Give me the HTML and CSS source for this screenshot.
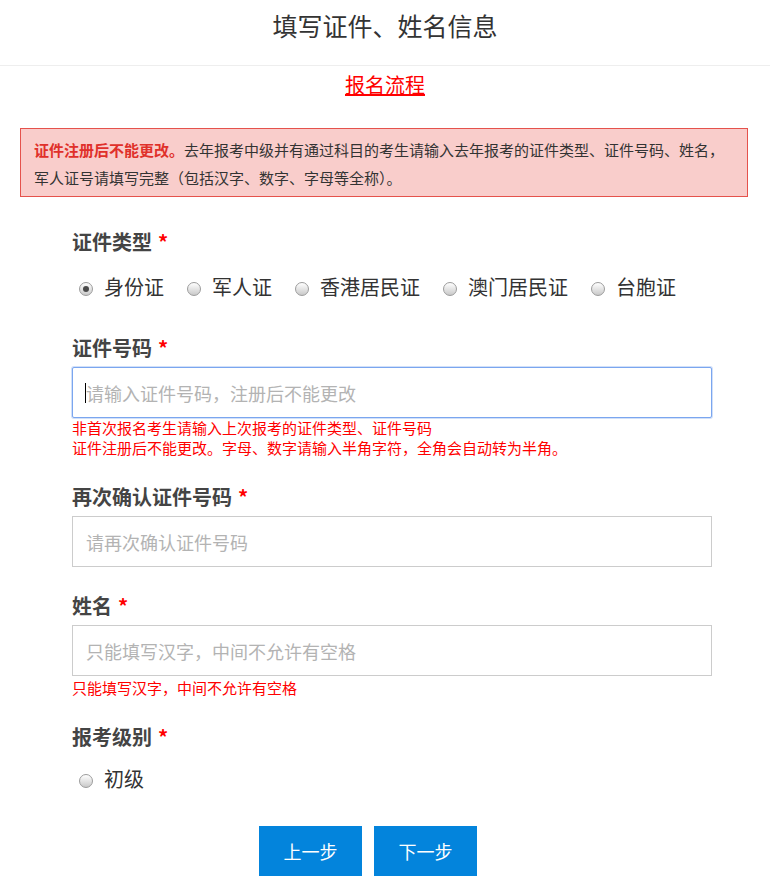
FILE: index.html
```html
<!DOCTYPE html>
<html lang="zh-CN">
<head>
<meta charset="utf-8">
<title>填写证件、姓名信息</title>
<link rel="stylesheet" href="styles.css">
</head>
<body>
<header class="page-head">
  <h1 class="page-title">填写证件、姓名信息</h1>
</header>
<div class="flow"><a class="flow-link" href="#">报名流程</a></div>
<div class="alert"><strong class="alert-strong">证件注册后不能更改。</strong>去年报考中级并有通过科目的考生请输入去年报考的证件类型、证件号码、姓名，<br>军人证号请填写完整（包括汉字、数字、字母等全称）。</div>

<form class="form">
  <div class="field field-first">
    <div class="label">证件类型<span class="req">*</span></div>
    <div class="radios">
      <label class="opt"><span class="dot checked"></span>身份证</label>
      <label class="opt"><span class="dot"></span>军人证</label>
      <label class="opt"><span class="dot"></span>香港居民证</label>
      <label class="opt"><span class="dot"></span>澳门居民证</label>
      <label class="opt"><span class="dot"></span>台胞证</label>
    </div>
  </div>

  <div class="field field-after-radio">
    <div class="label">证件号码<span class="req">*</span></div>
    <div class="input-wrap"><input class="input input-focus" type="text" placeholder="请输入证件号码，注册后不能更改"><span class="caret"></span></div>
    <div class="help">非首次报名考生请输入上次报考的证件类型、证件号码<br>证件注册后不能更改。字母、数字请输入半角字符，全角会自动转为半角。</div>
  </div>

  <div class="field">
    <div class="label">再次确认证件号码<span class="req">*</span></div>
    <input class="input" type="text" placeholder="请再次确认证件号码">
  </div>

  <div class="field">
    <div class="label">姓名<span class="req">*</span></div>
    <input class="input" type="text" placeholder="只能填写汉字，中间不允许有空格">
    <div class="help help-gap">只能填写汉字，中间不允许有空格</div>
  </div>

  <div class="field">
    <div class="label">报考级别<span class="req">*</span></div>
    <div class="radios radios-level">
      <label class="opt"><span class="dot"></span>初级</label>
    </div>
  </div>

  <div class="actions">
    <button class="btn" type="button">上一步</button>
    <button class="btn" type="button">下一步</button>
  </div>
</form>
</body>
</html>
```

FILE: styles.css
```css
html, body {
  margin: 0;
  padding: 0;
  background: #fff;
}
body {
  font-family: "Noto Sans CJK SC", "Noto Sans", "Liberation Sans", sans-serif;
  color: #333;
}
.page-head {
  height: 66px;
  border-bottom: 1px solid #eeeeee;
  box-sizing: border-box;
}
.page-title {
  margin: 0;
  font-size: 25px;
  font-weight: normal;
  line-height: 50px;
  text-align: center;
  color: #333;
}
.flow {
  text-align: center;
  line-height: 38px;
  height: 38px;
}
.flow-link {
  font-size: 20px;
  color: #ff0000;
  text-decoration: underline;
}
.alert {
  margin: 24px 22px 0 20px;
  padding: 7px 13px 4px 13px;
  border: 1px solid #e5524c;
  background: #f9cdcb;
  font-size: 15px;
  line-height: 28px;
  color: #333;
  white-space: nowrap;
}
.alert-strong {
  color: #e0302a;
  font-weight: bold;
}
.form {
  margin: 0 58px 0 72px;
}
.field {
  margin-top: 24px;
}
.field-first {
  margin-top: 30px;
}
.field-after-radio {
  margin-top: 31px;
}
.label {
  font-size: 20px;
  font-weight: bold;
  line-height: 30px;
  color: #444;
  margin-bottom: 4px;
}
.req {
  color: #ff0000;
  margin-left: 6px;
}
.radios {
  display: flex;
  margin-top: 15px;
  line-height: 30px;
  font-size: 20px;
  color: #333;
}
.radios-level {
  margin-top: 12px;
}
.opt {
  display: inline-flex;
  align-items: center;
  margin-right: 16px;
}
.dot {
  width: 14px;
  height: 14px;
  box-sizing: border-box;
  border-radius: 50%;
  border: 1px solid #9c9c9c;
  background: linear-gradient(#ffffff, #c9c9c9);
  margin: 3px 11px 0 7px;
  display: inline-flex;
  align-items: center;
  justify-content: center;
}
.dot.checked::after {
  content: "";
  width: 6px;
  height: 6px;
  border-radius: 50%;
  background: #4a4a4a;
}
.input-wrap {
  position: relative;
}
.input {
  display: block;
  width: 100%;
  height: 51px;
  box-sizing: border-box;
  border: 1px solid #cccccc;
  padding: 0 13px;
  font-family: inherit;
  font-size: 18px;
  color: #333;
  background: #fff;
  outline: none;
}
.input::placeholder {
  color: #b3b3b3;
}
.input-focus {
  border-color: #7ba6ef;
  border-radius: 2px;
  box-shadow: 0 0 0 1px rgba(123, 166, 239, 0.35);
}
.caret {
  position: absolute;
  left: 13px;
  top: 16px;
  width: 1px;
  height: 20px;
  background: #000;
}
.help {
  font-size: 15px;
  line-height: 20px;
  color: #ff0000;
}
.help-gap {
  margin-top: 2px;
}
.actions {
  display: flex;
  gap: 12px;
  padding-left: 187px;
  margin-top: 32px;
  padding-bottom: 16px;
}
.btn {
  width: 103px;
  height: 50px;
  border: none;
  background: #0384dc;
  color: #fff;
  font-family: inherit;
  font-size: 18px;
  cursor: pointer;
}
```
